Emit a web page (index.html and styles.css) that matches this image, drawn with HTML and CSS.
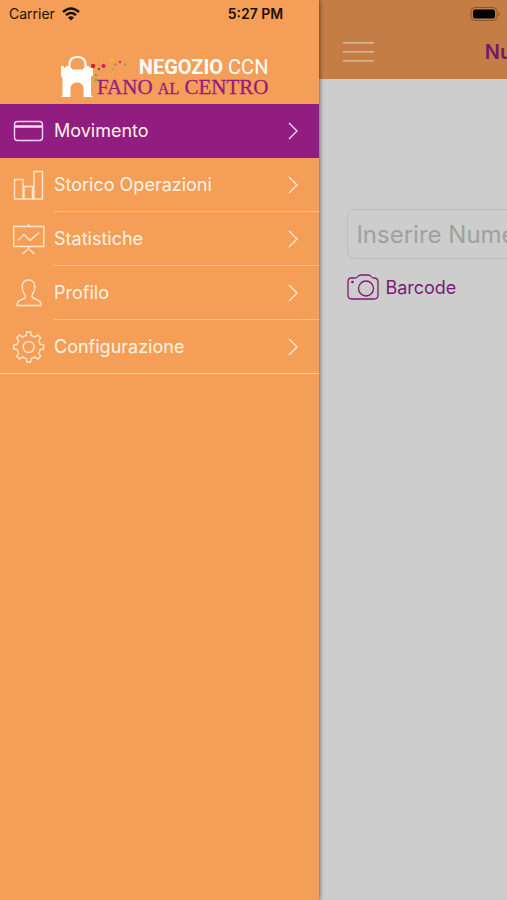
FILE: index.html
```html
<!DOCTYPE html>
<html lang="it">
<head>
<meta charset="utf-8">
<meta name="viewport" content="width=device-width, initial-scale=1">
<title>Negozio CCN Fano al Centro</title>
<link rel="stylesheet" href="styles.css">
</head>
<body>
<div class="status">
  <span class="carrier">Carrier
    <svg width="18" height="14" viewBox="0 0 18 14" fill="none" stroke="#1c0f05" stroke-width="2.4"><path d="M1 5Q9-2 17 5M4 8.200Q9 4 14 8.200"/><path d="M6 10.400Q9 8 12 10.400L9 13.400Z" fill="#1c0f05" stroke="none"/></svg>
  </span>
  <time class="clock">5:27 PM</time>
  <svg class="battery" width="32" height="14" viewBox="0 0 32 14"><rect x="1" y=".5" width="26" height="13" rx="4" fill="none" stroke="#86552d"/><rect x="3" y="2.500" width="22" height="9" rx="2" fill="#000"/><path d="M28.500 4.500Q31 7 28.500 9.500Z" fill="#86552d"/></svg>
</div>
<div class="app">
  <aside class="drawer">
    <div class="logo">
      <svg class="logo-mark" width="68" height="44" viewBox="0 0 68 44">
        <path d="M8.500 14V9Q9 2 16.500 2T24.500 9V14" fill="none" stroke="#fff" stroke-width="2.200"/>
        <path d="M0 11H3V12.500H5V11H8V13H11V14.500H22V13H25V11H28V12.500H30V11H32V20L30 22V40L32 42H22.500V33Q21.500 27.500 16 27.500T9.500 33V42H0L1.500 40V23L0 21Z" fill="#fff"/>
        <circle cx="32" cy="11" r="2.200" fill="#d81e2c"/><circle cx="42.500" cy="11" r="2" fill="#d81672"/><circle cx="37.500" cy="9" r="1.300" fill="#d5a338"/><circle cx="38" cy="14" r="1.300" fill="#52735f"/><circle cx="51" cy="5" r="2" fill="#efbd20"/><circle cx="59" cy="7" r="1.300" fill="#df3a4a"/><circle cx="64" cy="9.500" r="1.200" fill="#a98d60"/><circle cx="54.500" cy="9.500" r="1.100" fill="#df5e60"/><circle cx="52" cy="14" r="1.500" fill="#c5a45a"/><circle cx="33" cy="17" r="1.500" fill="#e9b22c"/><circle cx="35" cy="25" r="2.200" fill="#93b93b"/><circle cx="35" cy="20" r="1" fill="#d65a3a"/>
      </svg>
      <div class="logo-text">
        <div class="logo-top"><b>NEGOZIO</b> CCN</div>
        <div class="logo-bottom">FANO <small>AL</small> CENTRO</div>
      </div>
    </div>
    <nav class="menu">
      <a class="item active" href="#movimento">
        <svg class="icon" viewBox="0 0 32 32"><rect x="1.500" y="6.500" width="28" height="19" rx="3"/><path d="M2 11.500H29" stroke-width="2.600"/></svg>
        <span class="label">Movimento<svg class="chevron" viewBox="0 0 10 18"><path d="M1 1L9 9L1 17"/></svg></span>
      </a>
      <a class="item" href="#storico">
        <svg class="icon" viewBox="0 0 32 32"><path d="M1.500 10.500H10V30H1.500ZM11 17.500H19.500V30H11ZM21 2.500H29.500V30H21Z"/></svg>
        <span class="label">Storico Operazioni<svg class="chevron" viewBox="0 0 10 18"><path d="M1 1L9 9L1 17"/></svg></span>
      </a>
      <a class="item" href="#statistiche">
        <svg class="icon" viewBox="0 0 32 32"><path d="M.700 3.500H30.800V23.500H.700ZM15.500 1V3.500M5 17.500L11 11.500L17 17.500L26 9.500M15.500 23.500V26M9.500 31L15.500 25.500L21.500 31"/></svg>
        <span class="label">Statistiche<svg class="chevron" viewBox="0 0 10 18"><path d="M1 1L9 9L1 17"/></svg></span>
      </a>
      <a class="item" href="#profilo">
        <svg class="icon" viewBox="0 0 32 32"><path d="M11.500 17C8 12 8 3 15.500 3S23 12 19.500 17C18 20 19.500 21 22 22C26 23.500 28 24 28 28.500H4C4 24 6 23.500 10 22C12.500 21 13 20 11.500 17Z"/></svg>
        <span class="label">Profilo<svg class="chevron" viewBox="0 0 10 18"><path d="M1 1L9 9L1 17"/></svg></span>
      </a>
      <a class="item" href="#configurazione">
        <svg class="icon" viewBox="0 0 32 32"><circle cx="15.700" cy="16" r="5.500"/><path d="M13.200 4.500L13.800 1H17.600L18.200 4.500Q20.300 5 22 6.100L24.900 4L27.700 6.800L25.600 9.700Q26.700 11.400 27.200 13.500L30.700 14.100V17.900L27.200 18.500Q26.700 20.600 25.600 22.300L27.700 25.200L24.900 28L22 25.900Q20.300 27 18.200 27.500L17.600 31H13.800L13.200 27.500Q11.100 27 9.400 25.900L6.500 28L3.700 25.200L5.800 22.300Q4.700 20.600 4.200 18.500L.700 17.900V14.100L4.200 13.500Q4.700 11.400 5.800 9.700L3.700 6.800L6.500 4L9.400 6.100Q11.100 5 13.200 4.500Z"/></svg>
        <span class="label">Configurazione<svg class="chevron" viewBox="0 0 10 18"><path d="M1 1L9 9L1 17"/></svg></span>
      </a>
    </nav>
  </aside>
  <main class="page">
    <header class="bar">
      <button class="burger" type="button" aria-label="Menu"><span></span><span></span><span></span></button>
      <h1>Nuovo Movimento</h1>
    </header>
    <form class="form">
      <input type="text" aria-label="Inserire Numero" placeholder="Inserire Numero">
      <button class="barcode" type="button">
        <svg width="32" height="26" viewBox="0 0 32 26"><path d="M4 4H8Q10 4 11 2.500Q12 1 14 1H21Q23 1 24 2.500Q25 4 27 4Q31 4 31 8V21Q31 25 27 25H5Q1 25 1 21V8Q1 4 4 4Z"/><circle cx="19" cy="14.500" r="7.500"/><circle cx="5.500" cy="8" r=".7"/></svg>
        Barcode
      </button>
    </form>
  </main>
</div>
</body>
</html>
```
FILE: styles.css
```css
* {
  box-sizing: border-box;
}

body {
  margin: 0;
  font-family: Inter, "Liberation Sans", sans-serif;
  background: #cdcdcd;
}

button {
  padding: 0;
  border: 0;
  background: none;
  font: inherit;
}

.status {
  position: absolute;
  inset: 0 0 auto;
  z-index: 2;
  display: grid;
  grid-template-columns: 1fr auto 1fr;
  align-items: center;
  height: 27px;
  padding: 0 5px 0 9px;
  font-size: 14px;
  color: #1c0f05;
}

.carrier {
  display: flex;
  align-items: center;
  gap: 7px;
}

.clock {
  font-weight: 600;
}

.battery {
  justify-self: end;
}

.app {
  display: flex;
  min-height: 100vh;
  overflow: hidden;
}

.drawer {
  position: relative;
  z-index: 1;
  flex: 0 0 63%;
  background: #f59e57;
  box-shadow: 0 0 5px #000000b0;
}

.logo {
  display: flex;
  justify-content: flex-end;
  height: 104px;
  padding: 55px 51px 0 0;
}

.logo-mark {
  flex: none;
  margin-right: -32px;
}

.logo-text {
  text-align: right;
  white-space: nowrap;
}

.logo-top {
  font: 20px/24px Roboto, sans-serif;
  color: #fff;
}

.logo-bottom {
  font: 21px/16px "Liberation Serif", serif;
  color: #951b81;
  -webkit-text-stroke: 0.3px #951b81;
}

.logo-bottom small {
  font-size: 16px;
}

.menu {
  border-bottom: 1px solid #fbcfa6;
}

.item {
  display: flex;
  gap: 9px;
  height: 54px;
  padding-left: 13px;
  font-size: 18px;
  color: #fff4e6;
  text-decoration: none;
}

.icon,
.chevron {
  flex: none;
  fill: none;
  stroke: #ffe6cc;
  stroke-width: 1.4;
}

.icon {
  width: 32px;
  height: 32px;
  margin-top: 11px;
}

.label {
  flex: 1;
  display: flex;
  align-items: center;
  justify-content: space-between;
  padding-right: 21px;
  border-bottom: 1px solid #fabd87;
}

.active .label {
  border-bottom-color: transparent;
}

.item:last-child {
  height: 53px;
}

.item:last-child .label {
  border-bottom: 0;
}

.chevron {
  width: 10px;
  height: 18px;
}

.active {
  background: #911d80;
}

.active .icon,
.active .chevron {
  stroke: #f6d6f2;
}

.page {
  flex: 0 0 100%;
}

.bar {
  position: relative;
  display: flex;
  align-items: center;
  height: 79px;
  padding: 24px 24px 0;
  background: #c47e45;
}

.burger {
  display: grid;
  gap: 8px;
  width: 31px;
}

.burger span {
  height: 1px;
  background: #d8b695;
  box-shadow: 0 1px #cfa17a;
}

h1 {
  position: absolute;
  inset: 40px 0 auto;
  margin: 0;
  font-size: 20px;
  line-height: 24px;
  font-weight: 600;
  text-align: center;
  color: #771769;
}

.form {
  padding: 130px 28px 0;
}

.form input {
  display: block;
  width: 100%;
  height: 50px;
  padding: 0 8px;
  border: 1px solid #bfbfbf;
  border-radius: 7px;
  background: transparent;
  font: 24px Inter, sans-serif;
}

.form input::placeholder {
  color: #a0a0a0;
  opacity: 1;
}

.barcode {
  display: flex;
  align-items: center;
  gap: 6px;
  margin-top: 15px;
  font-size: 18px;
  color: #7d1a70;
}

.barcode svg {
  fill: none;
  stroke: #7d1a70;
  stroke-width: 1.3;
}
```
